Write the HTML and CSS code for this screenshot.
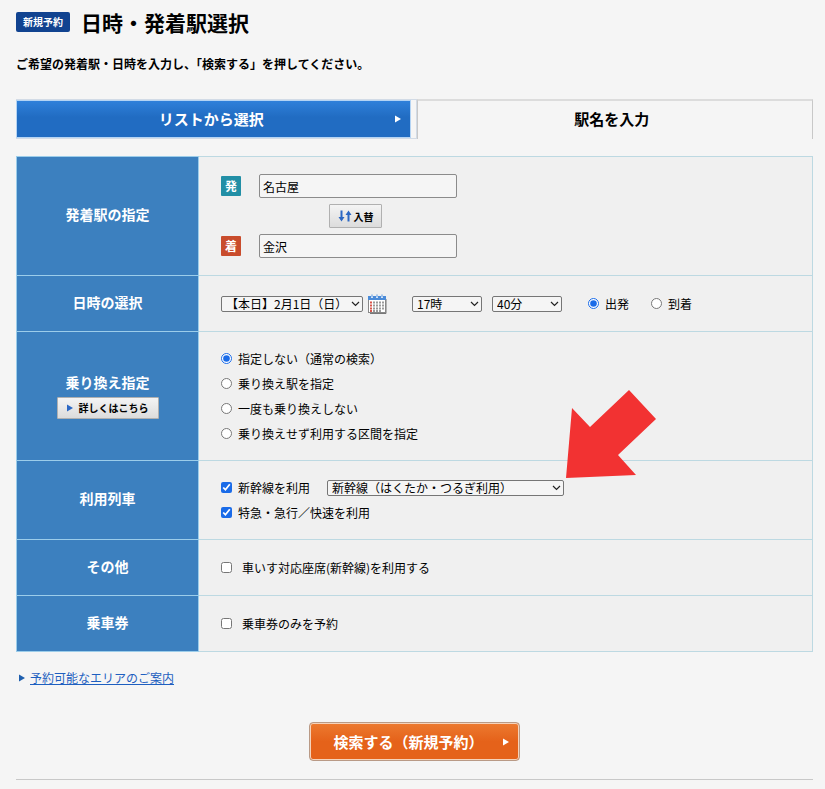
FILE: index.html
```html
<!DOCTYPE html>
<html lang="ja">
<head>
  <meta charset="UTF-8">
  <meta name="viewport" content="width=device-width, initial-scale=1.0">
  <title>日時・発着駅選択</title>
  <link rel="stylesheet" href="styles.css">
</head>
<body>
  <main class="container">
    <header class="page-header">
      <span class="label-new">新規予約</span>
      <h1>日時・発着駅選択</h1>
    </header>

    <p class="lead">ご希望の発着駅・日時を入力し、「検索する」を押してください。</p>

    <nav class="tabs">
      <div class="tab-wrap">
        <a href="#list" class="tab">リストから選択
          <svg class="tab-arrow" width="6" height="8" viewBox="0 0 6 8" aria-hidden="true"><path d="M0 0.5L6 4L0 7.5Z" fill="#fff"/></svg>
        </a>
      </div>
      <a href="#name" class="tab-current" aria-current="page">駅名を入力</a>
    </nav>

    <form>
      <table class="search-table">
        <tr class="row-station">
          <th scope="row">発着駅の指定</th>
          <td>
            <div class="stations">
              <label class="mark mark-dep" for="depStation">発</label>
              <input type="text" id="depStation" value="名古屋">
              <button type="button" class="btn-gray btn-swap">
                <svg width="14" height="12" viewBox="0 0 14 12" aria-hidden="true">
                  <path d="M2.5 0.5h2v6.5h2L3.5 11.5L0.5 7h2z" fill="#2c68c4"/>
                  <path d="M10.5 0.5L13.500 5h-2v6.5h-2V5h-2z" fill="#2c68c4"/>
                </svg>
                <span>入替</span>
              </button>
              <label class="mark mark-arr" for="arrStation">着</label>
              <input type="text" id="arrStation" value="金沢">
            </div>
          </td>
        </tr>
        <tr>
          <th scope="row">日時の選択</th>
          <td>
            <div class="datetime">
              <select class="select-date" aria-label="日付"><option>【本日】2月1日（日）</option></select>
              <button type="button" class="btn-calendar" aria-label="カレンダー">
                <svg width="20" height="20" viewBox="0 0 20 20">
                  <path d="M3 19.5h16V5" fill="none" stroke="#777" stroke-width="1"/>
                  <rect x="1.5" y="3.5" width="17" height="15" fill="#fff" stroke="#888"/>
                  <rect x="1" y="2" width="18" height="4" fill="#4b8bd8"/>
                  <path d="M5 1v3M10 1v3M15 1v3" stroke="#fff" stroke-width="2"/>
                  <path d="M5 0.5v3M10 0.5v3M15 0.5v3" stroke="#4b8bd8" stroke-width="1"/>
                  <path d="M3 8.5h3M3 11.5h3M3 14.5h3M3 17h3" stroke="#d8554a" stroke-width="2" stroke-dasharray="2 1"/>
                  <path d="M6 8.5h12M6 11.5h12M6 14.5h12M6 17h9" stroke="#9a9a9a" stroke-width="2" stroke-dasharray="2 1"/>
                </svg>
              </button>
              <select class="select-time select-hour" aria-label="時"><option>17時</option></select>
              <select class="select-time" aria-label="分"><option>40分</option></select>
              <div class="dep-arr">
                <label class="choice"><input type="radio" name="timeType" checked>出発</label>
                <label class="choice"><input type="radio" name="timeType">到着</label>
              </div>
            </div>
          </td>
        </tr>
        <tr>
          <th scope="row">
            乗り換え指定
            <button type="button" class="btn-gray btn-detail">
              <svg width="6" height="8" viewBox="0 0 6 8" aria-hidden="true"><path d="M0 0.5L6 4L0 7.5Z" fill="#2c68c4"/></svg>
              <span>詳しくはこちら</span>
            </button>
          </th>
          <td>
            <label class="choice"><input type="radio" name="transfer" checked>指定しない（通常の検索）</label>
            <label class="choice"><input type="radio" name="transfer">乗り換え駅を指定</label>
            <label class="choice"><input type="radio" name="transfer">一度も乗り換えしない</label>
            <label class="choice"><input type="radio" name="transfer">乗り換えせず利用する区間を指定</label>
          </td>
        </tr>
        <tr>
          <th scope="row">利用列車</th>
          <td>
            <div class="train">
              <label class="choice"><input type="checkbox" checked>新幹線を利用</label>
              <div class="train-select">
                <select aria-label="新幹線"><option>新幹線（はくたか・つるぎ利用）</option></select>
                <svg class="pointer" width="92" height="90" viewBox="0 0 92 90" aria-hidden="true">
                  <path d="M64 1L91 30L53 66L71 86L1 89L7 19L25 38Z" fill="#f23232"/>
                </svg>
              </div>
            </div>
            <label class="choice"><input type="checkbox" checked>特急・急行／快速を利用</label>
          </td>
        </tr>
        <tr>
          <th scope="row">その他</th>
          <td><label class="choice choice-wide"><input type="checkbox">車いす対応座席(新幹線)を利用する</label></td>
        </tr>
        <tr>
          <th scope="row">乗車券</th>
          <td><label class="choice choice-wide"><input type="checkbox">乗車券のみを予約</label></td>
        </tr>
      </table>

      <p class="area-link">
        <svg width="6" height="8" viewBox="0 0 6 8" aria-hidden="true"><path d="M0 0.5L6 4L0 7.5Z" fill="#1f5fae"/></svg>
        <a href="#area">予約可能なエリアのご案内</a>
      </p>

      <div class="submit-area">
        <button type="submit" class="btn-search">
          <span>検索する（新規予約）</span>
          <svg width="6" height="8" viewBox="0 0 6 8" aria-hidden="true"><path d="M0 0.5L6 4L0 7.5Z" fill="#fff"/></svg>
        </button>
      </div>
    </form>
  </main>
</body>
</html>
```
FILE: styles.css
```css
* {
  box-sizing: border-box;
}

body {
  margin: 0;
  background: #f5f5f5;
  color: #000;
  font-family: "Noto Sans CJK JP", sans-serif;
  font-size: 12px;
  line-height: 24px;
}

button,
input,
select {
  margin: 0;
  font-family: inherit;
  font-size: 12px;
  color: #000;
}

.container {
  padding: 8px 12px 8px 16px;
}

.page-header {
  display: flex;
  align-items: center;
  gap: 11px;
}

.label-new {
  padding: 0 7px;
  background: #114390;
  border-radius: 2px;
  color: #fff;
  font-size: 10px;
  font-weight: bold;
  line-height: 20px;
}

h1 {
  margin: 0;
  font-size: 21px;
  font-weight: bold;
  line-height: 28px;
}

.lead {
  margin: 16px 0 23px;
  font-weight: bold;
}

/* tabs */
.tabs {
  display: grid;
  grid-template-columns: calc(50% + 2px) 1fr;
  margin-bottom: 17px;
  font-size: 15px;
  font-weight: bold;
  text-align: center;
}

.tab-wrap {
  padding-right: 5px;
  border: 1px solid #d2dbe6;
  border-left: none;
}

.tab {
  display: block;
  position: relative;
  padding-right: 4px;
  border: 1px solid #b4d4f4;
  background: linear-gradient(#2f80da, #216cc2 45%);
  color: #fff;
  line-height: 36px;
  text-decoration: none;
}

.tab-arrow {
  position: absolute;
  top: 14px;
  right: 9px;
}

.tab-current {
  padding-right: 6px;
  border: 1px solid #c8c8c8;
  border-top: 2px solid #dcdcdc;
  border-bottom: none;
  color: #000;
  line-height: 36px;
  text-decoration: none;
}

/* search conditions */
.search-table {
  width: 100%;
  border-collapse: collapse;
  background: #f0f0f0;
}

.search-table tr {
  height: 56px;
}

.search-table .row-station {
  height: 119px;
}

.search-table th {
  width: 182px;
  padding: 0 0 4px;
  border: 1px solid #9ccdea;
  background: #3c80bf;
  color: #fff;
  font-size: 14px;
}

.search-table td {
  padding: 14px 22px;
  border: 1px solid #bdd9e2;
}

input[type="text"] {
  width: 198px;
  height: 24px;
  padding: 0 3px;
  border: 1px solid #8b8b8b;
  border-radius: 2px;
  background: #f5f5f5;
}

select {
  appearance: none;
  height: 16px;
  padding: 0 14px 0 4px;
  border: 1px solid #767676;
  border-radius: 2px;
  background: #f5f5f5 url("data:image/svg+xml,%3Csvg xmlns='http://www.w3.org/2000/svg' width='9' height='6'%3E%3Cpath d='M1 1l3.5 3.5L8 1' fill='none' stroke='%23222' stroke-width='1.2'/%3E%3C/svg%3E") no-repeat right 2px center;
  line-height: 14px;
}

.stations {
  display: grid;
  grid-template-columns: 38px 198px;
  row-gap: 6px;
  align-items: center;
}

.mark {
  width: 20px;
  border-radius: 1px;
  color: #fff;
  font-weight: bold;
  line-height: 20px;
  text-align: center;
}

.mark-dep {
  background: #228fa6;
}

.mark-arr {
  background: #c94c2c;
}

.btn-gray {
  display: inline-flex;
  align-items: center;
  justify-content: center;
  padding: 0;
  border: 1px solid #b0b0b0;
  border-radius: 1px;
  background: linear-gradient(#f4f4f4, #dcdcdc);
  font-size: 10px;
  font-weight: bold;
}

.btn-swap {
  grid-column: 2;
  width: 53px;
  height: 24px;
  margin-left: 70px;
  gap: 2px;
}

.btn-detail {
  display: flex;
  width: 102px;
  height: 22px;
  margin: 3px auto 0;
  gap: 6px;
}

.datetime {
  display: flex;
  align-items: center;
}

.select-date {
  width: 142px;
}

.btn-calendar {
  display: flex;
  margin: 0 25px 0 4px;
  padding: 0;
  border: none;
  background: none;
}

.select-time {
  width: 70px;
}

.select-hour {
  margin-right: 10px;
}

.dep-arr {
  display: flex;
  gap: 22px;
  margin-left: 26px;
}

.choice {
  display: flex;
  align-items: center;
  gap: 6px;
  line-height: 25px;
}

.choice input {
  width: 11px;
  height: 11px;
  accent-color: #1a6be8;
}

.choice-wide {
  gap: 10px;
}

.train {
  display: flex;
  align-items: center;
  gap: 17px;
}

.train-select {
  display: flex;
  position: relative;
}

.train-select select {
  width: 237px;
}

.pointer {
  position: absolute;
  left: 100%;
  bottom: 100%;
  margin: 0 0 1px 1px;
}

.area-link {
  display: flex;
  align-items: center;
  gap: 5px;
  margin: 14px 0 0 3px;
}

.area-link a {
  color: #1e5fc0;
}

.submit-area {
  margin-top: 32px;
  padding-bottom: 18px;
  border-bottom: 1px solid #c8c8c8;
  text-align: center;
}

.btn-search {
  display: inline-flex;
  align-items: center;
  gap: 19px;
  height: 39px;
  padding: 0 10px 0 23px;
  border: 1px solid #b99a86;
  border-radius: 4px;
  background: linear-gradient(#ec7a30, #e5621a 50%);
  box-shadow: inset 0 0 0 1px #f5d3bb;
  color: #fff;
  font-size: 15px;
  font-weight: bold;
  vertical-align: top;
}
```
